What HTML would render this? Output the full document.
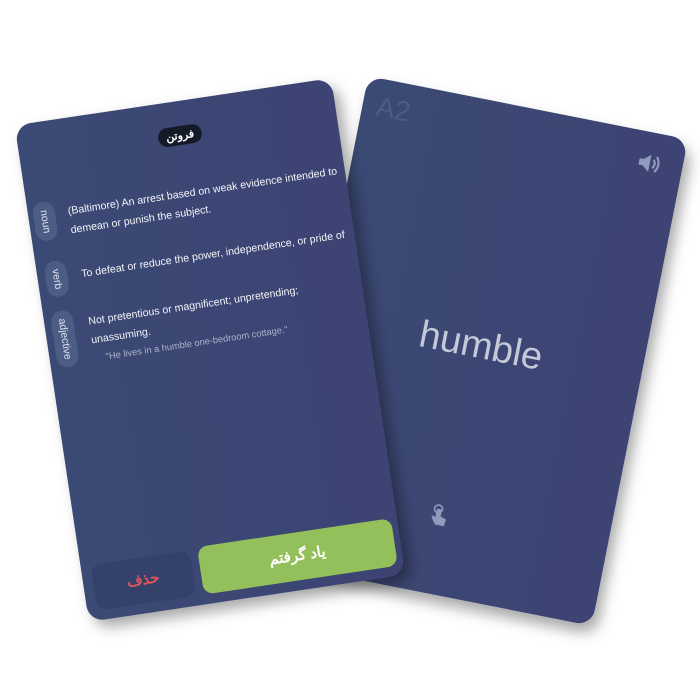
<!DOCTYPE html>
<html><head><meta charset="utf-8"><style>
body{margin:0;width:700px;height:700px;background:#fff;overflow:hidden;position:relative;font-family:"Liberation Sans","Noto Sans CJK SC",sans-serif}
.card{position:absolute;border-radius:16px;background:linear-gradient(90deg,#3b4a74,#3d4373);box-shadow:6px 8px 14px rgba(0,0,0,.35)}
#r{width:326px;height:496px;left:317px;top:103px;transform:rotate(11.2deg)}
#l{width:320px;height:502px;left:50px;top:99px;transform:rotate(-8.5deg)}
.a{position:absolute}
.pill{position:absolute;background:#4d5c85;color:#dfe3ee;font-size:10.5px;border-radius:12px;writing-mode:vertical-rl;padding:8px 5px;text-align:center}
.t{position:absolute;color:#f2f4f8;font-size:10.6px;line-height:19px;left:40px;width:290px}
</style></head><body>
<div class="card" id="r">
 <div class="a" style="left:14px;top:12px;font-size:28px;color:#4e5b86">A2</div>
 <svg class="a" style="left:280px;top:20px" width="24" height="22" viewBox="0 0 22 20"><path d="M2 7h4l6-5v16l-6-5H2z" fill="#8f9bbd"/><path d="M15 6q3 4 0 8M17.5 3q5 7 0 14" stroke="#8f9bbd" stroke-width="2" fill="none"/></svg>
 <div class="a" style="left:0;width:326px;top:222px;text-align:center;font-size:38px;color:#c4c9d8">humble</div>
 <svg class="a" style="left:146px;top:406px" width="18" height="22" viewBox="0 0 18 22"><circle cx="7" cy="5" r="4" stroke="#8f9bbd" stroke-width="1.6" fill="none"/><path d="M5.5 5v9l-2-2-2 2 5 7h9l1-7-6-2V5z" fill="#8f9bbd"/></svg>
</div>
<div class="card" id="l">
 <div class="a" style="left:140px;top:25px;background:#151a28;color:#fff;font-size:11px;padding:3px 8px;border-radius:11px;font-weight:bold">فروتن</div>
 <div class="pill" style="left:5px;top:80px">noun</div>
 <div class="t" style="top:84px">(Baltimore) An arrest based on weak evidence intended to demean or punish the subject.</div>
 <div class="pill" style="left:8px;top:140px">verb</div>
 <div class="t" style="top:148px;left:44px">To defeat or reduce the power, independence, or pride of</div>
 <div class="pill" style="left:7px;top:190px">adjective</div>
 <div class="t" style="top:196px;left:44px;width:250px">Not pretentious or magnificent; unpretending; unassuming.</div>
 <div class="t" style="top:233px;left:56px;font-size:9.3px;color:#aab3c9">"He lives in a humble one-bedroom cottage."</div>
 <div class="a" style="left:10px;top:446px;width:100px;height:46px;border-radius:10px;background:#34416a;color:#e0555a;font-size:15px;font-weight:bold;text-align:center;line-height:46px">حذف</div>
 <div class="a" style="left:118px;top:444px;width:196px;height:48px;border-radius:10px;background:#93c05a;color:#fff;font-size:15px;font-weight:bold;text-align:center;line-height:48px">یاد گرفتم</div>
</div>
</body></html>
